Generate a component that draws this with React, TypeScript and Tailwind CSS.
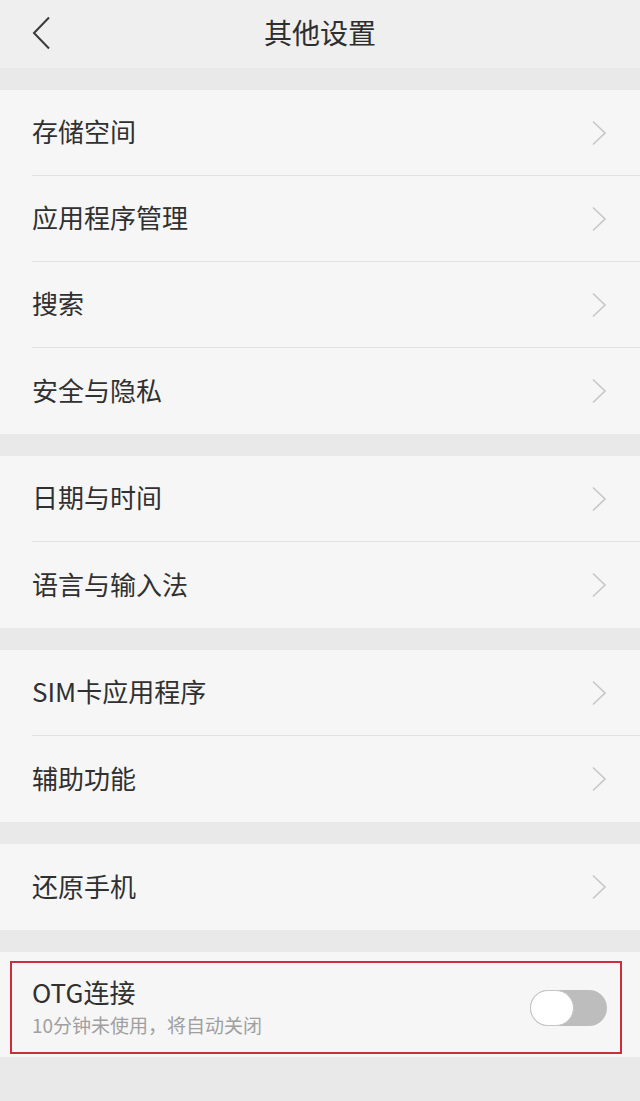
import React from "react";

const font = { fontFamily: '"Noto Sans CJK SC", "Noto Sans", sans-serif' };

function Chevron() {
  return (
    <svg width="16" height="26" viewBox="0 0 16 26" fill="none" className="shrink-0">
      <path d="M2 1.5 L14 13 L2 24.5" stroke="#c6c6c6" strokeWidth="1.6" />
    </svg>
  );
}

function Row({ label, last }: { label: string; last?: boolean }) {
  return (
    <div className="flex pl-8">
      <div
        className={
          "flex-1 h-[86px] flex items-center justify-between pr-[33px] " +
          (last ? "" : "border-b border-[#e2e2e2]")
        }
      >
        <span className="text-[26px] leading-none text-[#303030] pb-[3px]">{label}</span>
        <Chevron />
      </div>
    </div>
  );
}

function Section({ items }: { items: string[] }) {
  return (
    <div className="bg-[#f6f6f6]">
      {items.map((s, i) => (
        <Row key={s} label={s} last={i === items.length - 1} />
      ))}
    </div>
  );
}

export default function App() {
  return (
    <div className="w-[640px] h-[1101px] bg-[#e9e9e9] flex flex-col" style={font}>
      {/* 顶部标题栏 */}
      <div className="h-[68px] bg-[#efefef] relative flex items-center justify-center">
        <svg
          width="20"
          height="34"
          viewBox="0 0 20 34"
          fill="none"
          className="absolute left-[31px] top-[16px]"
        >
          <path d="M18 1.5 L3 17 L18 32.5" stroke="#3a3a3a" strokeWidth="2" />
        </svg>
        <span className="text-[28px] text-[#2e2e2e] leading-none pb-[5px]">其他设置</span>
      </div>

      <div className="flex flex-col gap-[22px] pt-[22px]">
        <Section items={["存储空间", "应用程序管理", "搜索", "安全与隐私"]} />
        <Section items={["日期与时间", "语言与输入法"]} />
        <Section items={["SIM卡应用程序", "辅助功能"]} />
        <Section items={["还原手机"]} />

        {/* OTG */}
        <div className="bg-[#f6f6f6] h-[105px] pl-[10px] pr-[18px] pt-[9px]">
          <div className="h-[93px] border-2 border-[#c9303a] flex items-center justify-between pl-[20px] pr-[13px]">
            <div className="flex flex-col pb-[2px]">
              <span className="text-[26px] leading-none text-[#303030]">OTG连接</span>
              <span className="text-[19px] leading-none text-[#a0a0a0] mt-[10px]">
                10分钟未使用，将自动关闭
              </span>
            </div>
            <div className="w-[77px] h-[36px] rounded-full bg-[#bdbdbd] flex items-center">
              <div className="w-[44px] h-[36px] rounded-full bg-white border border-[#c4c4c4]" />
            </div>
          </div>
        </div>
      </div>
    </div>
  );
}
